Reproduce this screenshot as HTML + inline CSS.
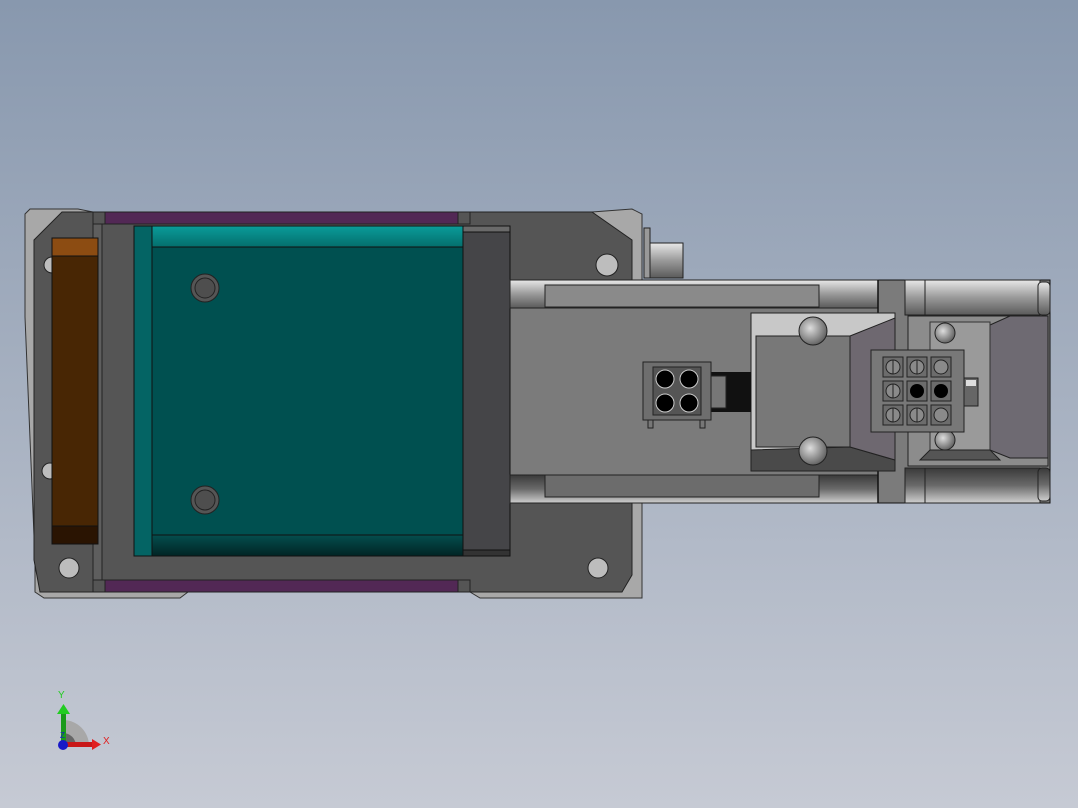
<!DOCTYPE html>
<html><head><meta charset="utf-8"><style>html,body{margin:0;padding:0;width:1078px;height:808px;overflow:hidden}</style></head>
<body>
<svg width="1078" height="808" viewBox="0 0 1078 808" xmlns="http://www.w3.org/2000/svg" font-family="Liberation Sans, sans-serif">
<defs>
<linearGradient id="bg" x1="0" y1="0" x2="0" y2="1"><stop offset="0" stop-color="#8898ae"/><stop offset="1" stop-color="#c6cad4"/></linearGradient>
<linearGradient id="rail" x1="0" y1="0" x2="0" y2="1"><stop offset="0" stop-color="#e8e8e8"/><stop offset="0.5" stop-color="#9a9a9a"/><stop offset="1" stop-color="#5a5a5a"/></linearGradient>
<linearGradient id="railb" x1="0" y1="0" x2="0" y2="1"><stop offset="0" stop-color="#3a3a3a"/><stop offset="0.5" stop-color="#6a6a6a"/><stop offset="1" stop-color="#cfcfcf"/></linearGradient>
<linearGradient id="tealT" x1="0" y1="0" x2="0" y2="1"><stop offset="0" stop-color="#0a9c9a"/><stop offset="1" stop-color="#046e6c"/></linearGradient>
<linearGradient id="tealB" x1="0" y1="0" x2="0" y2="1"><stop offset="0" stop-color="#044e4e"/><stop offset="1" stop-color="#012424"/></linearGradient>
<radialGradient id="bolt" cx="0.4" cy="0.4" r="0.6"><stop offset="0" stop-color="#ddd"/><stop offset="1" stop-color="#666"/></radialGradient>
</defs>
<rect width="1078" height="808" fill="url(#bg)"/>
<polygon points="25,214 30,209 78,209 93,212 592,212 632,209 642,214 642,598 480,598 470,592 188,592 180,598 44,598 35,592 35,560 25,317" fill="#a8a8a8" stroke="#333" stroke-width="1"/>
<polygon points="34,240 62,212 592,212 632,240 632,575 622,592 40,592 34,560" fill="#555" stroke="#222" stroke-width="1"/>
<rect x="93" y="212" width="377" height="12" fill="#555" stroke="#222"/>
<rect x="105" y="212" width="353" height="12" fill="#522855" stroke="#222"/>
<rect x="93" y="580" width="377" height="12" fill="#555" stroke="#222"/>
<rect x="105" y="580" width="353" height="12" fill="#522855" stroke="#222"/>
<rect x="93" y="224" width="9" height="356" fill="#5e5e5e" stroke="#222"/>
<circle cx="69" cy="568" r="10" fill="#bdbdbd" stroke="#222"/>
<circle cx="607" cy="265" r="11" fill="#bdbdbd" stroke="#222"/>
<circle cx="598" cy="568" r="10" fill="#bdbdbd" stroke="#222"/>
<circle cx="52" cy="265" r="8" fill="#bdbdbd" stroke="#222"/>
<circle cx="50" cy="471" r="8" fill="#bdbdbd" stroke="#222"/>
<rect x="52" y="238" width="46" height="306" fill="#482604" stroke="#111"/>
<rect x="52" y="238" width="46" height="18" fill="#8c4c12" stroke="#111"/>
<rect x="52" y="526" width="46" height="18" fill="#2a1402" stroke="#111"/>
<rect x="134" y="226" width="330" height="330" fill="#005050" stroke="#111"/>
<rect x="146" y="226" width="318" height="21" fill="url(#tealT)" stroke="#111"/>
<rect x="146" y="535" width="318" height="21" fill="url(#tealB)" stroke="#111"/>
<rect x="134" y="226" width="18" height="330" fill="#046464" stroke="#111"/>
<circle cx="205" cy="288" r="14" fill="#555" stroke="#222"/><circle cx="205" cy="288" r="10" fill="#4e4e4e" stroke="#222"/>
<circle cx="205" cy="500" r="14" fill="#555" stroke="#222"/><circle cx="205" cy="500" r="10" fill="#4e4e4e" stroke="#222"/>
<rect x="463" y="226" width="47" height="330" fill="#454548" stroke="#111"/>
<rect x="463" y="226" width="47" height="6" fill="#6a6a6a" stroke="#111"/>
<rect x="463" y="550" width="47" height="6" fill="#333" stroke="#111"/>
<rect x="644" y="228" width="6" height="50" fill="#999" stroke="#222"/>
<rect x="650" y="243" width="33" height="35" fill="url(#rail)" stroke="#222"/>
<rect x="510" y="280" width="540" height="223" fill="#7b7b7b" stroke="#111"/>
<rect x="510" y="280" width="368" height="28" fill="url(#rail)" stroke="#222"/>
<rect x="545" y="285" width="274" height="22" fill="#8a8a8a" stroke="#222"/>
<rect x="510" y="475" width="368" height="28" fill="url(#railb)" stroke="#222"/>
<rect x="545" y="475" width="274" height="22" fill="#6c6c6c" stroke="#222"/>
<line x1="878" y1="280" x2="878" y2="503" stroke="#111" stroke-width="1.5"/>
<rect x="905" y="280" width="135" height="35" fill="url(#rail)" stroke="#222"/>
<rect x="905" y="468" width="135" height="35" fill="url(#railb)" stroke="#222"/>
<rect x="1038" y="282" width="12" height="33" rx="4" fill="url(#rail)" stroke="#222"/>
<rect x="1038" y="468" width="12" height="33" rx="4" fill="url(#railb)" stroke="#222"/>
<rect x="905" y="280" width="20" height="35" fill="url(#rail)" stroke="#222"/>
<rect x="905" y="468" width="20" height="35" fill="url(#railb)" stroke="#222"/>
<rect x="908" y="316" width="140" height="150" fill="#8c8c8c" stroke="#222"/>
<polygon points="990,325 1010,316 1048,316 1048,458 1010,458 990,450" fill="#6e6a72" stroke="#222"/>
<polygon points="930,322 990,322 990,450 930,458" fill="#9a9a9a" stroke="#333"/>
<polygon points="930,450 990,450 1000,460 920,460" fill="#555" stroke="#222"/>
<circle cx="945" cy="333" r="10" fill="url(#bolt)" stroke="#222"/>
<circle cx="945" cy="440" r="10" fill="url(#bolt)" stroke="#222"/>
<rect x="751" y="313" width="144" height="158" fill="#c8c8c8" stroke="#222"/>
<rect x="756" y="336" width="94" height="111" fill="#787878" stroke="#222"/>
<polygon points="751,450 850,447 895,460 895,471 751,471" fill="#4a4a4a" stroke="#222"/>
<polygon points="850,336 895,318 895,460 850,447" fill="#6e6870" stroke="#222"/>
<circle cx="813" cy="331" r="14" fill="url(#bolt)" stroke="#222"/>
<circle cx="813" cy="451" r="14" fill="url(#bolt)" stroke="#222"/>
<rect x="711" y="372" width="40" height="40" fill="#111"/>
<rect x="706" y="376" width="20" height="32" fill="#777" stroke="#222"/>
<rect x="643" y="362" width="68" height="58" fill="#6e6e6e" stroke="#222"/>
<rect x="648" y="420" width="5" height="8" fill="#777" stroke="#222"/><rect x="700" y="420" width="5" height="8" fill="#777" stroke="#222"/>
<rect x="653" y="367" width="48" height="48" fill="#555" stroke="#222"/>
<circle cx="665" cy="379" r="9" fill="#000" stroke="#ccc"/><circle cx="689" cy="379" r="9" fill="#000" stroke="#ccc"/>
<circle cx="665" cy="403" r="9" fill="#000" stroke="#ccc"/><circle cx="689" cy="403" r="9" fill="#000" stroke="#ccc"/>
<rect x="960" y="378" width="18" height="28" fill="#666" stroke="#222"/>
<rect x="966" y="380" width="10" height="6" fill="#ddd"/>
<rect x="871" y="350" width="93" height="82" fill="#787878" stroke="#222"/>
<g fill="#6c6c6c" stroke="#222">
<rect x="883" y="357" width="20" height="20"/><rect x="907" y="357" width="20" height="20"/><rect x="931" y="357" width="20" height="20"/>
<rect x="883" y="381" width="20" height="20"/><rect x="907" y="381" width="20" height="20"/><rect x="931" y="381" width="20" height="20"/>
<rect x="883" y="405" width="20" height="20"/><rect x="907" y="405" width="20" height="20"/><rect x="931" y="405" width="20" height="20"/>
</g>
<g fill="#8a8a8a" stroke="#222">
<circle cx="893" cy="367" r="7"/><circle cx="917" cy="367" r="7"/><circle cx="941" cy="367" r="7"/>
<circle cx="893" cy="391" r="7"/><circle cx="893" cy="415" r="7"/><circle cx="917" cy="415" r="7"/><circle cx="941" cy="415" r="7"/>
</g>
<circle cx="917" cy="391" r="7" fill="#000"/><circle cx="941" cy="391" r="7" fill="#000"/>
<g stroke="#222"><line x1="893" y1="360" x2="893" y2="374"/><line x1="917" y1="360" x2="917" y2="374"/><line x1="893" y1="384" x2="893" y2="398"/><line x1="893" y1="408" x2="893" y2="422"/><line x1="917" y1="408" x2="917" y2="422"/></g>
<path d="M63,746 L63,720 A26,26 0 0 1 89,746 Z" fill="#a8a8a8"/>
<path d="M63,746 L63,733 A13,13 0 0 1 76,746 Z" fill="#666"/>
<rect x="61" y="712" width="5" height="34" fill="#1a9a1a"/>
<polygon points="57,714 63.5,704 70,714" fill="#22cc22"/>
<rect x="63" y="742" width="30" height="5" fill="#c81818"/>
<polygon points="92,739 101,744.5 92,750" fill="#e02020"/>
<circle cx="63" cy="745" r="5" fill="#1818c8"/>
<text x="58" y="698" font-size="10" fill="#22cc22">Y</text>
<text x="103" y="744" font-size="10" fill="#e02020">X</text>
<text x="60" y="738" font-size="8" fill="#1818c8">Z</text>
</svg>
</body></html>
